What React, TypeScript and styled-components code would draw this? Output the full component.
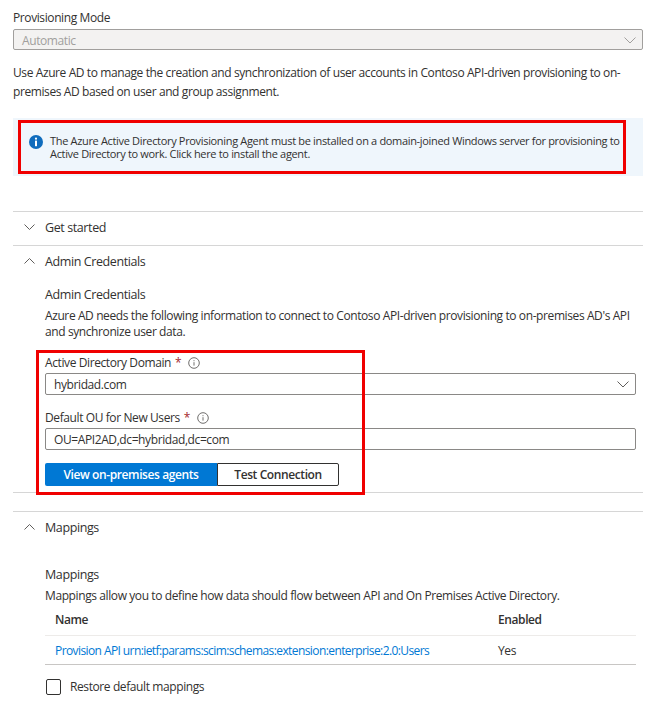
import React from "react";
import styled, { createGlobalStyle } from "styled-components";

const GlobalStyle = createGlobalStyle`
  html, body {
    margin: 0;
    padding: 0;
    background: #fff;
  }
  body {
    font-family: "Open Sans", "Noto Sans", "Liberation Sans", sans-serif;
    font-size: 12px;
    color: #323130;
    letter-spacing: -0.4px;
  }
`;

const Page = styled.div`
  width: 655px;
  height: 710px;
  overflow: hidden;
  padding: 10px 12px 0 13px;
  box-sizing: border-box;
`;

const Label = styled.div`
  height: 16px;
  line-height: 16px;
  display: flex;
  align-items: center;
`;

const Select = styled.div<{ $disabled?: boolean }>`
  height: 22px;
  box-sizing: border-box;
  border: 1px solid ${(p) => (p.$disabled ? "#a19f9d" : "#8a8886")};
  border-radius: 2px;
  background: ${(p) => (p.$disabled ? "#f3f2f1" : "#fff")};
  color: ${(p) => (p.$disabled ? "#a19f9d" : "#323130")};
  padding: 1px 6px 0 8px;
  display: flex;
  align-items: center;
  justify-content: space-between;
`;

const ModeSelect = styled(Select)`
  margin-top: 3px;
  height: 21px;
`;

const Intro = styled.p`
  margin: 13px 0 0;
  line-height: 19px;
`;

const Banner = styled.div`
  position: relative;
  margin-top: 17px;
  height: 58px;
  background: #eff6fc;
  padding: 16px 20px 0 16px;
  box-sizing: border-box;
  display: flex;
  gap: 7px;
  font-size: 11px;
  line-height: 13px;
  letter-spacing: -0.33px;
`;

const BannerText = styled.div`
  white-space: nowrap;
`;

const RedBox = styled.div`
  position: absolute;
  border: 3px solid #f00000;
  box-sizing: border-box;
  pointer-events: none;
`;

const BannerMark = styled(RedBox)`
  left: 5px;
  top: 2px;
  width: 608px;
  height: 54px;
`;

const FormMark = styled(RedBox)`
  left: -9px;
  top: -3px;
  width: 329px;
  height: 145px;
`;

const InfoBadge = styled.svg`
  flex: none;
  width: 14px;
  height: 14px;
  margin-top: 1px;
`;

const Section = styled.section<{ $gap: number }>`
  border-top: 1px solid #d6d6d6;
  margin-top: ${(p) => p.$gap}px;
`;

const SectionHeader = styled.div`
  height: 33px;
  box-sizing: border-box;
  padding: 0 0 2px 11px;
  display: flex;
  align-items: center;
  gap: 10px;
  font-size: 12.5px;
`;

const SectionBody = styled.div`
  padding: 0 7px 6px 32px;
`;

const Chevron = styled.svg<{ $wide: number; $tone: string }>`
  flex: none;
  width: ${(p) => p.$wide}px;
  height: ${(p) => Math.round(p.$wide / 2) + 1}px;
  fill: none;
  stroke: ${(p) => p.$tone};
  stroke-width: 1;
`;

const SubTitle = styled.div<{ $top: number }>`
  font-size: 12.5px;
  line-height: 16px;
  margin-top: ${(p) => p.$top}px;
`;

const BodyText = styled.p`
  margin: 5px 0 0;
  line-height: 16px;
`;

const MappingsText = styled(Label)`
  margin-top: 5px;
`;

const Required = styled.span`
  color: #a4262c;
  margin-left: 4px;
`;

const Hint = styled.svg`
  width: 12px;
  height: 12px;
  margin-left: 7px;
`;

const Form = styled.div`
  position: relative;
  margin-top: 13px;
`;

const FieldLabel = styled(Label)`
  height: 18px;
  box-sizing: border-box;
  padding-top: 2px;
  margin-bottom: 2px;
`;

const Input = styled.div`
  height: 22px;
  box-sizing: border-box;
  border: 1px solid #8a8886;
  border-radius: 2px;
  padding: 0 8px;
  display: flex;
  align-items: center;
`;

const FieldGroup = styled.div`
  margin-top: 13px;
`;

const Buttons = styled.div`
  display: flex;
  margin-top: 13px;
`;

const PrimaryButton = styled.div`
  width: 172px;
  height: 23px;
  background: #0078d4;
  color: #fff;
  font-weight: 600;
  display: flex;
  align-items: center;
  justify-content: center;
  border-radius: 2px 0 0 2px;
`;

const SecondaryButton = styled.div`
  width: 122px;
  height: 23px;
  box-sizing: border-box;
  border: 1px solid #323130;
  font-weight: 600;
  display: flex;
  align-items: center;
  justify-content: center;
  border-radius: 0 2px 2px 0;
`;

const TableHead = styled.div`
  display: grid;
  grid-template-columns: 443px 1fr;
  padding-left: 10px;
  height: 32px;
  box-sizing: border-box;
  align-items: center;
  border-bottom: 1px solid #edebe9;
  font-weight: 600;
`;

const TableRow = styled(TableHead)`
  font-weight: 400;
  height: 29px;
  border-bottom: 1px solid #c8c6c4;
`;

const MappingLink = styled.a`
  color: #0078d4;
  text-decoration: none;
  letter-spacing: -0.59px;
`;

const CheckRow = styled.div`
  display: flex;
  align-items: center;
  gap: 9px;
  margin-top: 13px;
  padding-left: 1px;
`;

const CheckBox = styled.div`
  width: 15px;
  height: 16px;
  box-sizing: border-box;
  border: 1px solid #323130;
  border-radius: 2px;
`;

const DownChevron = ({ wide, tone = "#605e5c" }: { wide: number; tone?: string }) => (
  <Chevron $wide={wide} $tone={tone} viewBox={`0 0 ${wide} ${Math.round(wide / 2) + 1}`}>
    <path d={`M0.5 0.5 L${wide / 2} ${wide / 2} L${wide - 0.5} 0.5`} />
  </Chevron>
);

const UpChevron = ({ wide }: { wide: number }) => (
  <Chevron $wide={wide} $tone="#605e5c" viewBox={`0 0 ${wide} ${Math.round(wide / 2) + 1}`}>
    <path d={`M0.5 ${wide / 2} L${wide / 2} 0.5 L${wide - 0.5} ${wide / 2}`} />
  </Chevron>
);

const InfoHint = () => (
  <Hint viewBox="0 0 12 12" fill="none" stroke="#605e5c" strokeWidth="0.9">
    <circle cx="6" cy="6" r="5.3" />
    <path d="M6 5.2v3.4M6 3.2v1" />
  </Hint>
);

const App: React.FC = () => {
  return (
    <Page>
      <GlobalStyle />
      <Label>Provisioning Mode</Label>
      <ModeSelect $disabled>
        Automatic
        <DownChevron wide={12} tone="#a19f9d" />
      </ModeSelect>
      <Intro>
        Use Azure AD to manage the creation and synchronization of user accounts in Contoso
        API-driven provisioning to on-premises AD based on user and group assignment.
      </Intro>

      <Banner>
        <InfoBadge viewBox="0 0 14 14">
          <circle cx="7" cy="7" r="7" fill="#0f6cbd" />
          <circle cx="7" cy="3.7" r="1.1" fill="#fff" />
          <rect x="6" y="5.6" width="2" height="5.6" fill="#fff" />
        </InfoBadge>
        <BannerText>
          The Azure Active Directory Provisioning Agent must be installed on a domain-joined Windows server for provisioning to
          <br />
          Active Directory to work. Click here to install the agent.
        </BannerText>
        <BannerMark />
      </Banner>

      <Section $gap={35}>
        <SectionHeader>
          <DownChevron wide={11} />
          Get started
        </SectionHeader>
      </Section>

      <Section $gap={0}>
        <SectionHeader>
          <UpChevron wide={11} />
          Admin Credentials
        </SectionHeader>
        <SectionBody>
          <SubTitle $top={8}>Admin Credentials</SubTitle>
          <BodyText>
            Azure AD needs the following information to connect to Contoso API-driven provisioning to on-premises AD's API and synchronize user data.
          </BodyText>
          <Form>
            <FieldLabel>
              Active Directory Domain<Required>*</Required>
              <InfoHint />
            </FieldLabel>
            <Select>
              hybridad.com
              <DownChevron wide={12} />
            </Select>
            <FieldGroup>
              <FieldLabel>
                Default OU for New Users<Required>*</Required>
                <InfoHint />
              </FieldLabel>
              <Input>OU=API2AD,dc=hybridad,dc=com</Input>
            </FieldGroup>
            <Buttons>
              <PrimaryButton>View on-premises agents</PrimaryButton>
              <SecondaryButton>Test Connection</SecondaryButton>
            </Buttons>
            <FormMark />
          </Form>
        </SectionBody>
      </Section>

      <Section $gap={0} />

      <Section $gap={18}>
        <SectionHeader>
          <UpChevron wide={11} />
          Mappings
        </SectionHeader>
        <SectionBody>
          <SubTitle $top={22}>Mappings</SubTitle>
          <MappingsText>
            Mappings allow you to define how data should flow between API and On Premises Active Directory.
          </MappingsText>
          <TableHead>
            <span>Name</span>
            <span>Enabled</span>
          </TableHead>
          <TableRow>
            <MappingLink>Provision API urn:ietf:params:scim:schemas:extension:enterprise:2.0:Users</MappingLink>
            <span>Yes</span>
          </TableRow>
          <CheckRow>
            <CheckBox />
            Restore default mappings
          </CheckRow>
        </SectionBody>
      </Section>
    </Page>
  );
};

export default App;
